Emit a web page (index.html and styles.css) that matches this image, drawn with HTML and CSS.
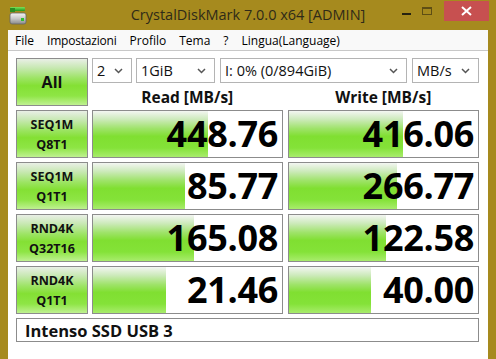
FILE: index.html
```html
<!DOCTYPE html>
<html>
<head>
<meta charset="utf-8">
<link rel="stylesheet" href="styles.css">
</head>
<body>
<div class="window">
  <div class="titlebar">
    <svg class="appicon" width="18" height="19" viewBox="0 0 18 19">
      <defs>
        <linearGradient id="gbar" x1="0" y1="0" x2="0" y2="1">
          <stop offset="0" stop-color="#7de25a"/>
          <stop offset="1" stop-color="#1e9a1e"/>
        </linearGradient>
        <linearGradient id="gbody" x1="0" y1="0" x2="0" y2="1">
          <stop offset="0" stop-color="#f4f4f4"/>
          <stop offset="0.5" stop-color="#c8c8c8"/>
          <stop offset="1" stop-color="#8a8a8a"/>
        </linearGradient>
      </defs>
      <rect x="1" y="1" width="15" height="4" rx="1" fill="url(#gbar)"/>
      <rect x="1" y="2" width="5" height="4" fill="#2a8f22"/>
      <rect x="1" y="7" width="16" height="11" rx="2" fill="url(#gbody)" stroke="#666" stroke-width="0.8"/>
      <rect x="12" y="12" width="3" height="3" fill="#2ec02e"/>
    </svg>
    <div class="title">CrystalDiskMark 7.0.0 x64 [ADMIN]</div>
    <div class="winbtns">
      <div class="btn-min"><span></span></div>
      <div class="btn-max"><span></span></div>
      <div class="btn-close">
        <svg width="11" height="10" viewBox="0 0 11 10"><path d="M1 1 L10 9 M10 1 L1 9" stroke="#fff" stroke-width="2"/></svg>
      </div>
    </div>
  </div>
  <div class="client">
    <div class="menubar">
      <span class="menuitem">File</span>
      <span class="menuitem">Impostazioni</span>
      <span class="menuitem">Profilo</span>
      <span class="menuitem">Tema</span>
      <span class="menuitem">?</span>
      <span class="menuitem">Lingua(Language)</span>
    </div>
    <div class="content">
      <div class="grid">
        <div class="btn all">All</div>
        <div class="topright">
          <div class="selects">
            <div class="sel s-count"><span>2</span><svg class="chev" width="9" height="6" viewBox="0 0 9 6"><path d="M1 1 L4.5 4.5 L8 1" fill="none" stroke="#555" stroke-width="1.5"/></svg></div>
            <div class="sel s-size"><span>1GiB</span><svg class="chev" width="9" height="6" viewBox="0 0 9 6"><path d="M1 1 L4.5 4.5 L8 1" fill="none" stroke="#555" stroke-width="1.5"/></svg></div>
            <div class="sel s-drive"><span>I: 0% (0/894GiB)</span><svg class="chev" width="9" height="6" viewBox="0 0 9 6"><path d="M1 1 L4.5 4.5 L8 1" fill="none" stroke="#555" stroke-width="1.5"/></svg></div>
            <div class="sel s-unit"><span>MB/s</span><svg class="chev" width="9" height="6" viewBox="0 0 9 6"><path d="M1 1 L4.5 4.5 L8 1" fill="none" stroke="#555" stroke-width="1.5"/></svg></div>
          </div>
          <div class="headers">
            <div class="hdr hdr-read">Read [MB/s]</div>
            <div class="hdr hdr-write">Write [MB/s]</div>
          </div>
        </div>

        <div class="btn label">SEQ1M<br>Q8T1</div>
        <div class="cell"><div class="bar" style="width:115px"></div><span class="val">448.76</span></div>
        <div class="cell write"><div class="bar" style="width:114px"></div><span class="val">416.06</span></div>

        <div class="btn label">SEQ1M<br>Q1T1</div>
        <div class="cell"><div class="bar" style="width:92px"></div><span class="val">85.77</span></div>
        <div class="cell write"><div class="bar" style="width:108px"></div><span class="val">266.77</span></div>

        <div class="btn label">RND4K<br>Q32T16</div>
        <div class="cell"><div class="bar" style="width:101px"></div><span class="val">165.08</span></div>
        <div class="cell write"><div class="bar" style="width:97px"></div><span class="val">122.58</span></div>

        <div class="btn label">RND4K<br>Q1T1</div>
        <div class="cell"><div class="bar" style="width:73px"></div><span class="val">21.46</span></div>
        <div class="cell write"><div class="bar" style="width:82px"></div><span class="val">40.00</span></div>

        <div class="comment">Intenso SSD USB 3</div>
      </div>
    </div>
  </div>
</div>
</body>
</html>
```

FILE: styles.css
```css
html, body {
  margin: 0;
  padding: 0;
}
body {
  width: 496px;
  height: 359px;
  background: #a68a1e;
  overflow: hidden;
  font-family: "Open Sans", "Noto Sans", sans-serif;
}
.window {
  width: 496px;
  height: 359px;
  display: flex;
  flex-direction: column;
}
.titlebar {
  height: 31px;
  position: relative;
  display: flex;
  align-items: flex-start;
}
.appicon {
  position: absolute;
  left: 9px;
  top: 6px;
}
.title {
  width: 100%;
  text-align: center;
  font-family: "Open Sans", sans-serif;
  font-size: 14.5px;
  color: #2f2a18;
  line-height: 30px;
}
.winbtns {
  position: absolute;
  right: 7px;
  top: 1px;
  display: flex;
  align-items: flex-start;
}
.btn-min {
  width: 26px;
  height: 19px;
  position: relative;
}
.btn-min span {
  position: absolute;
  left: 9px;
  top: 12px;
  width: 9px;
  height: 2px;
  background: #262210;
}
.btn-max {
  width: 25px;
  height: 19px;
  position: relative;
}
.btn-max span {
  position: absolute;
  left: 3px;
  top: 6px;
  width: 8px;
  height: 5px;
  border: 1px solid #5e4e14;
  border-top-width: 2px;
}
.btn-close {
  width: 45px;
  height: 20px;
  background: #c75050;
  display: flex;
  align-items: center;
  justify-content: center;
}
.client {
  margin: 0 8px 12px 8px;
  flex: 1;
  background: #ffffff;
  display: flex;
  flex-direction: column;
}
.menubar {
  height: 20px;
  background: #f9f9f9;
  border-bottom: 1px solid #c8c8c8;
  display: flex;
  align-items: center;
  padding-left: 7px;
  font-size: 12px;
  color: #000;
}
.menuitem {
  margin-right: 13px;
}
.menuitem:nth-child(2) { letter-spacing: -0.2px; }
.content {
  padding: 7px 8px 4px 8px;
}
.grid {
  display: grid;
  grid-template-columns: 72px 191px 192px;
  column-gap: 4px;
  row-gap: 4px;
  grid-auto-rows: 48px;
}
.grid > .write {
  margin-left: 1px;
}
.btn {
  box-sizing: border-box;
  border: 1px solid #8c8c8c;
  background: linear-gradient(to bottom, #e9efe6 0%, #c6e8b0 20%, #9ce463 42%, #84e034 58%, #8ee545 80%, #bff191 100%);
  display: flex;
  align-items: center;
  justify-content: center;
  text-align: center;
  color: #111;
  font-weight: 700;
}
.all {
  font-size: 16px;
}
.label {
  font-size: 12.5px;
  line-height: 20px;
  padding-top: 1px;
}
.topright {
  grid-column: 2 / 4;
  display: flex;
  flex-direction: column;
}
.selects {
  display: flex;
  height: 25px;
}
.sel {
  box-sizing: border-box;
  height: 25px;
  border: 1px solid #b4b4b4;
  background: #fff;
  display: flex;
  align-items: center;
  justify-content: space-between;
  padding: 0 8px 0 4px;
  font-size: 14.5px;
  color: #111;
}
.sel span {
  white-space: nowrap;
}
.s-count { width: 40px; margin-right: 4px; }
.s-size { width: 79px; margin-right: 5px; }
.s-drive { width: 187px; margin-right: 5px; }
.s-unit { width: 67px; }
.headers {
  display: flex;
  flex: 1;
  align-items: center;
}
.hdr {
  font-weight: 700;
  font-size: 15.5px;
  color: #111;
  text-align: center;
  padding-top: 3px;
}
.hdr-read { width: 191px; margin-right: 5px; }
.hdr-write { width: 192px; }
.cell {
  box-sizing: border-box;
  border: 1px solid #8c8c8c;
  background: #fff;
  position: relative;
  display: flex;
  align-items: center;
  justify-content: flex-end;
  overflow: hidden;
}
.bar {
  position: absolute;
  left: 0;
  top: 0;
  bottom: 0;
  background: linear-gradient(to bottom, #f3f6f2 0%, #cdeabb 18%, #9fe36a 38%, #80df31 55%, #84e238 80%, #a8ec6c 100%);
}
.val {
  position: relative;
  font-weight: 700;
  font-size: 36px;
  line-height: 46px;
  color: #000;
  padding-right: 4px;
  letter-spacing: -0.3px;
}
.comment {
  grid-column: 1 / 4;
  box-sizing: border-box;
  height: 24px;
  border: 1px solid #8c8c8c;
  background: #fff;
  display: flex;
  align-items: center;
  padding-left: 8px;
  font-weight: 700;
  font-size: 16.5px;
  color: #111;
}
```
